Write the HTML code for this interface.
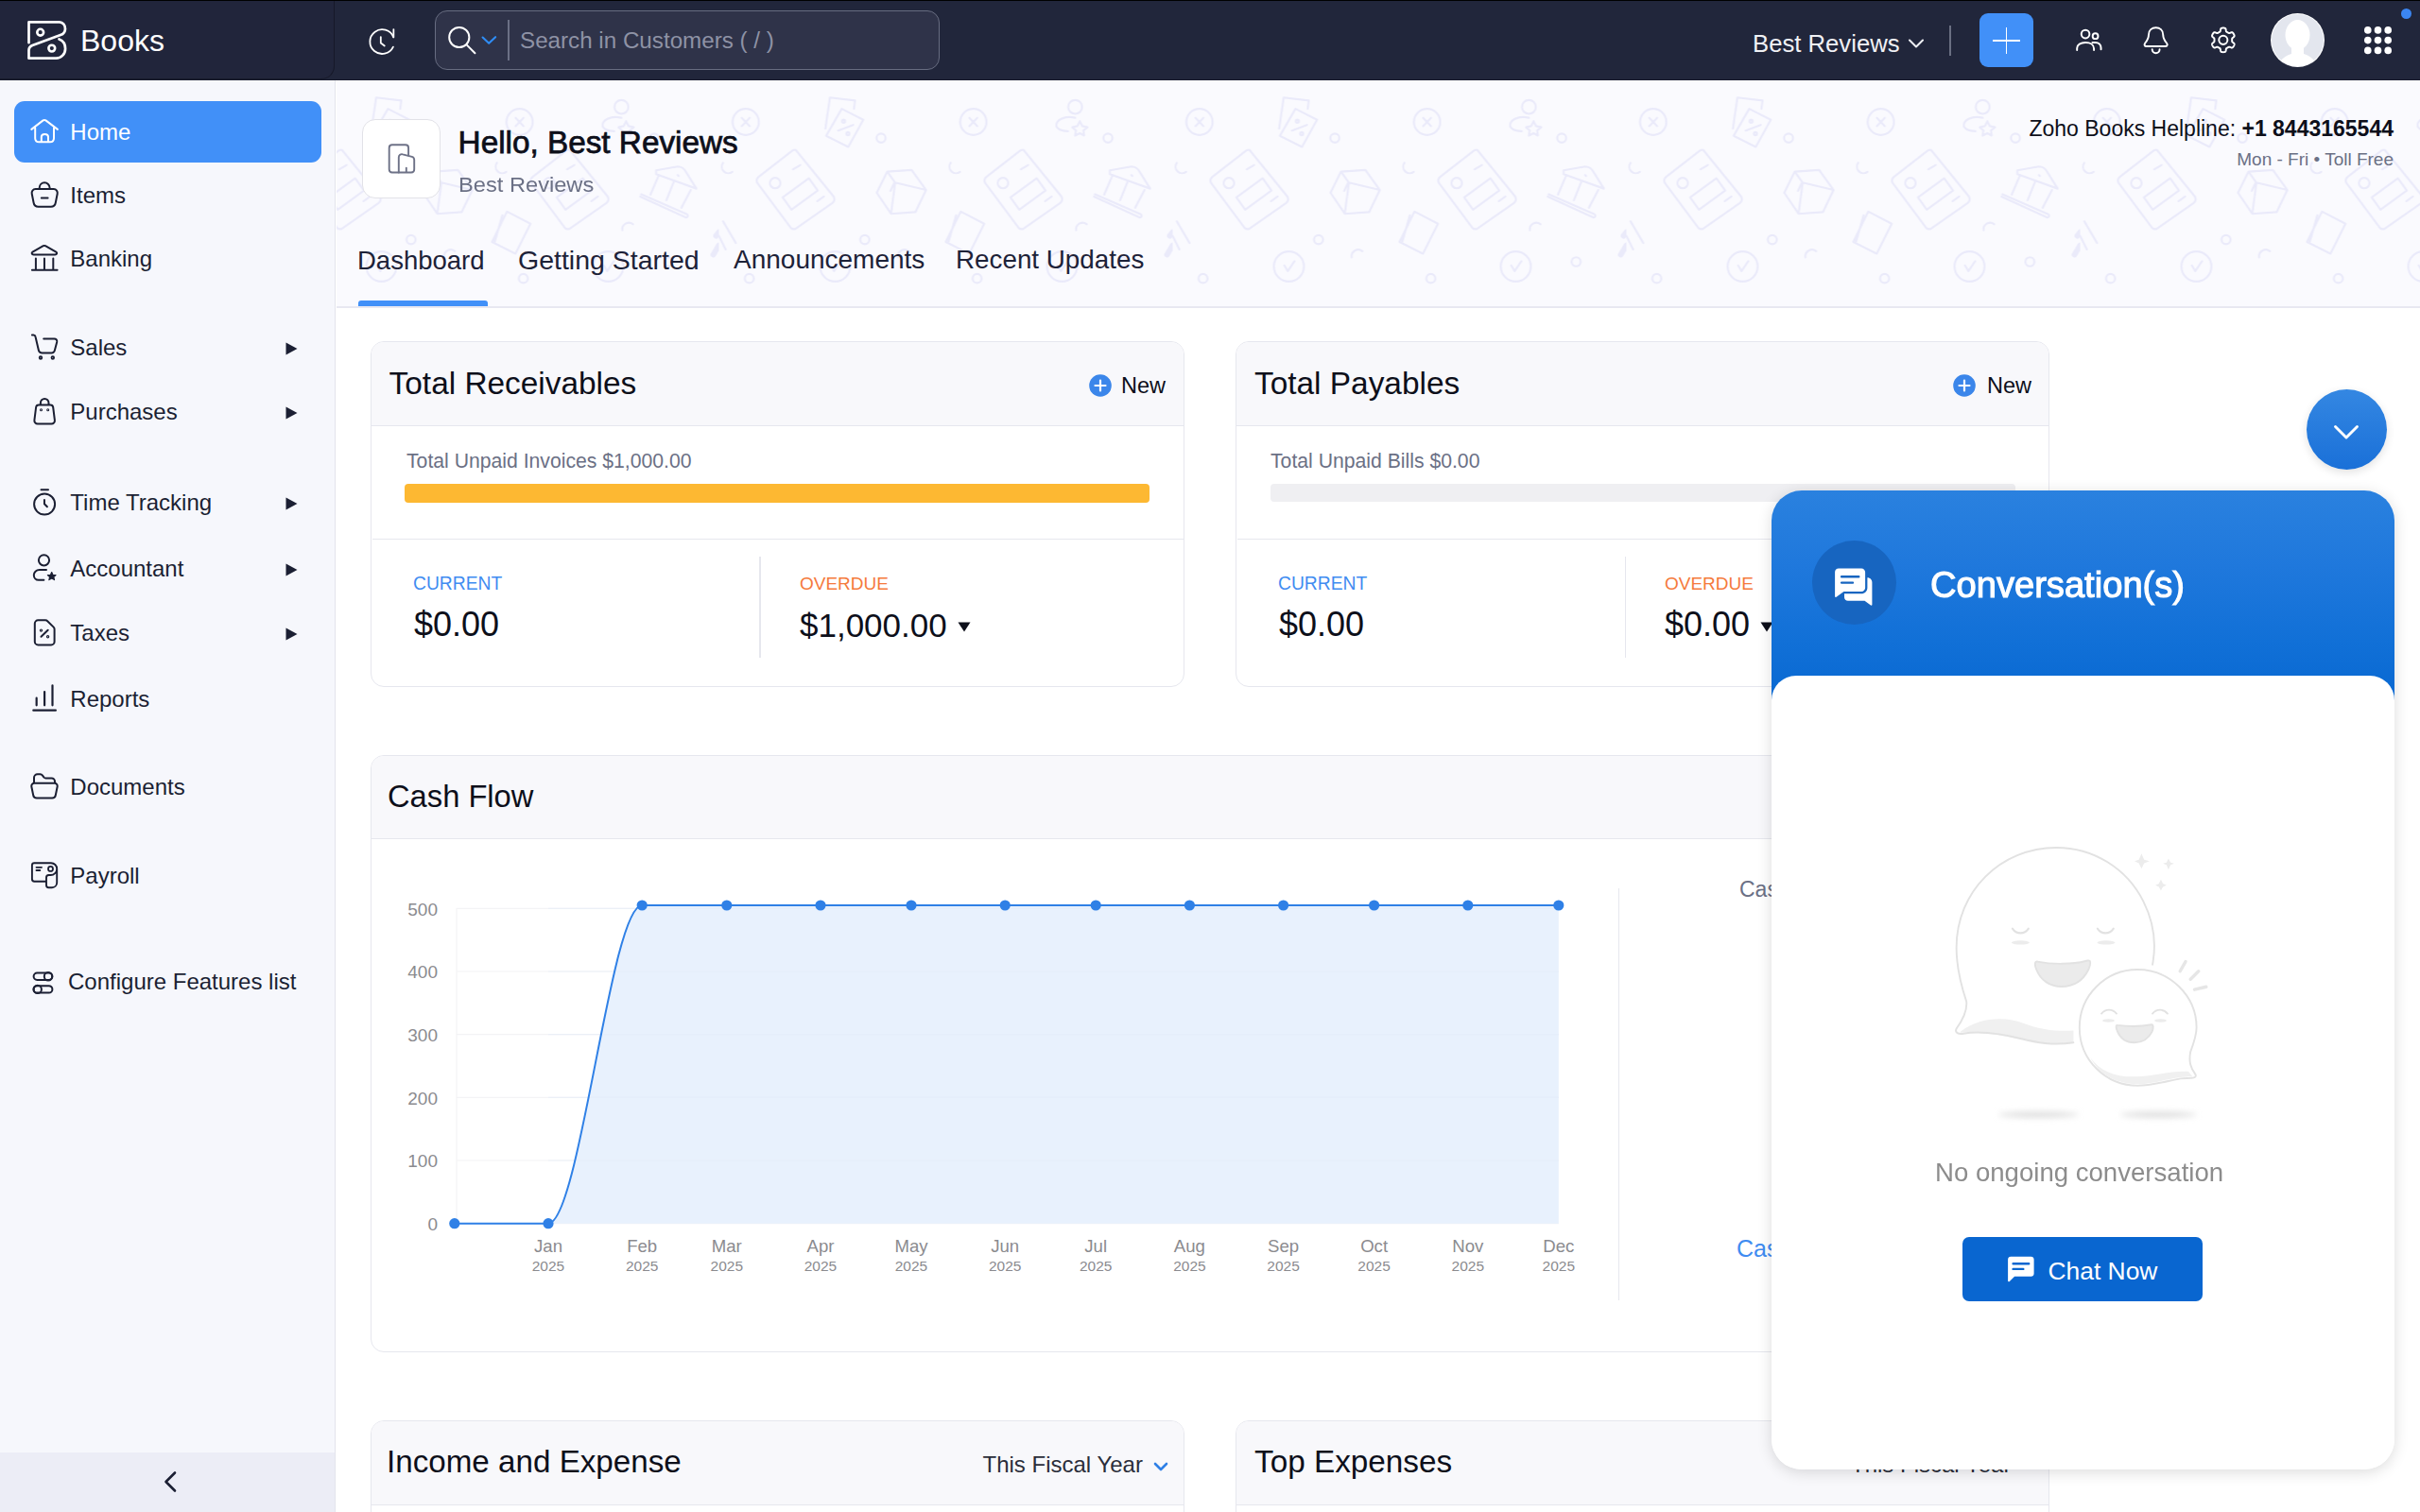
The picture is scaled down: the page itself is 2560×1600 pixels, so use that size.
<!DOCTYPE html>
<html><head><meta charset="utf-8"><title>Zoho Books</title>
<style>
html,body{margin:0;padding:0;width:2560px;height:1600px;overflow:hidden;background:#fff;}
body{position:relative;font-family:"Liberation Sans", sans-serif;}
.t{position:absolute;white-space:nowrap;line-height:1;font-family:"Liberation Sans", sans-serif;}
svg{overflow:visible;}
</style></head><body>
<div style="position:absolute;left:0px;top:0px;width:2560px;height:85px;background:#21263b;"></div>
<div style="position:absolute;left:0px;top:0px;width:2560px;height:1.2px;background:#000;"></div>
<div style="position:absolute;left:0px;top:84px;width:2560px;height:1px;background:#181b2c;"></div>
<div style="position:absolute;left:-2px;top:1px;width:356px;height:83px;box-sizing:border-box;background:#21253b;border-right:1.2px solid #161929;border-bottom:1.2px solid #191c2c;border-bottom-right-radius:14px;"></div>
<svg style="position:absolute;left:24px;top:16px;" width="52" height="52" viewBox="0 0 52 52" fill="none"><path d="M6.5 29.2 V7.4 H38.9 C42.3 7.4 45 10.6 45 14.4 C45 17.5 43 20 40 21.1 L10.3 32 C8 32.9 6.5 34.6 6.5 37 V45.7 H35.4 C40.8 45.7 45.1 41 45.1 35.4 C45.1 30.8 42.4 26.9 38.5 25.4" stroke="#fff" stroke-width="2.7" stroke-linecap="round" stroke-linejoin="round"/><circle cx="18.7" cy="18.2" r="3.4" stroke="#fff" stroke-width="2.6"/><circle cx="30.8" cy="35.1" r="3.4" stroke="#fff" stroke-width="2.6"/></svg>
<div class="t" style="left:85px;top:26.91px;font-size:32px;color:#ffffff;font-weight:400;">Books</div>
<svg style="position:absolute;left:380px;top:20px;" width="160" height="48" viewBox="0 0 2420 726" fill="none"><path d="M548 292 A195 195 0 1 0 543 448" stroke="#fff" stroke-width="27" stroke-linecap="round"/><path d="M550 168 V292" stroke="#fff" stroke-width="27" stroke-linecap="round"/><path d="M345 288 V385 L405 432" stroke="#fff" stroke-width="27" stroke-linecap="round" stroke-linejoin="round"/></svg>
<div style="position:absolute;left:460px;top:11px;width:534px;height:63px;box-sizing:border-box;border:1.5px solid #686d81;border-radius:13px;background:#2f3349;"></div>
<svg style="position:absolute;left:380px;top:20px;" width="160" height="48" viewBox="0 0 2420 726" fill="none"><circle cx="1600" cy="295" r="160" stroke="#fff" stroke-width="30"/><path d="M1722 418 L1852 548" stroke="#fff" stroke-width="30" stroke-linecap="round"/><path d="M1975 295 L2075 390 L2180 290" stroke="#2f8df5" stroke-width="32" stroke-linecap="round" stroke-linejoin="round"/></svg>
<div style="position:absolute;left:537px;top:21px;width:1.6px;height:43px;background:#6b7085;"></div>
<div class="t" style="left:550px;top:31.11px;font-size:24.2px;color:#8e92a5;font-weight:400;">Search in Customers ( / )</div>
<div class="t" style="left:1854px;top:33.54px;font-size:25.7px;color:#f0f1f5;font-weight:400;">Best Reviews</div>
<svg style="position:absolute;left:2018px;top:40px;" width="18" height="12" viewBox="0 0 18 12" fill="none"><path d="M2 2.5 L9 9.5 L16 2.5" stroke="#eef0f5" stroke-width="2" stroke-linecap="round" stroke-linejoin="round"/></svg>
<div style="position:absolute;left:2062px;top:27px;width:2px;height:32px;background:#6a6f82;"></div>
<div style="position:absolute;left:2094px;top:14px;width:57px;height:57px;background:#4190f8;border-radius:9px;"></div>
<div style="position:absolute;left:2108px;top:41.7px;width:29px;height:1.9px;background:#fff;"></div>
<div style="position:absolute;left:2121.6px;top:29px;width:1.9px;height:28px;background:#fff;"></div>
<svg style="position:absolute;left:2185px;top:20px;" width="190" height="46" viewBox="0 0 2420 586" fill="none"><g stroke="#fff" stroke-width="25" stroke-linecap="round" stroke-linejoin="round"><circle cx="268" cy="205" r="55"/><circle cx="402" cy="232" r="37"/><path d="M155 420 V395 C155 350 205 318 268 318 C335 318 383 350 383 400 V420"/><path d="M362 318 H400 C445 318 478 348 478 392 V410"/><path d="M1090 370 H1350 C1372 370 1378 345 1362 325 C1322 275 1315 250 1315 215 C1315 150 1270 118 1218 118 C1165 118 1120 150 1120 215 C1120 250 1113 275 1073 325 C1058 345 1064 370 1090 370 Z"/><path d="M1168 412 A50 50 0 0 0 1268 412"/><path d="M2244.0 285.0 L2244.0 288.1 L2243.9 291.2 L2243.8 294.4 L2243.8 297.5 L2243.9 300.7 L2244.5 303.9 L2245.8 307.4 L2248.8 311.3 L2254.0 316.0 L2261.2 321.5 L2268.2 327.4 L2272.8 333.0 L2275.0 338.1 L2275.4 342.7 L2274.7 347.0 L2273.5 351.1 L2271.9 355.1 L2270.2 359.0 L2268.2 362.8 L2266.2 366.5 L2264.0 370.2 L2261.6 373.7 L2259.2 377.2 L2256.5 380.5 L2253.6 383.6 L2250.2 386.4 L2246.0 388.3 L2240.5 389.0 L2233.3 387.8 L2224.7 384.7 L2216.3 381.3 L2209.7 379.0 L2204.8 378.4 L2201.1 379.0 L2198.0 380.2 L2195.2 381.7 L2192.5 383.2 L2189.9 384.9 L2187.2 386.5 L2184.5 388.1 L2181.8 389.6 L2179.1 391.1 L2176.3 392.6 L2173.6 394.1 L2170.9 395.8 L2168.3 397.9 L2166.0 400.8 L2164.1 405.3 L2162.7 412.2 L2161.5 421.2 L2159.9 430.2 L2157.3 437.1 L2154.0 441.5 L2150.2 444.1 L2146.1 445.6 L2142.0 446.6 L2137.8 447.3 L2133.5 447.7 L2129.3 447.9 L2125.0 448.0 L2120.7 447.9 L2116.5 447.7 L2112.2 447.3 L2108.0 446.6 L2103.9 445.6 L2099.8 444.1 L2096.0 441.5 L2092.7 437.1 L2090.1 430.2 L2088.5 421.2 L2087.3 412.2 L2085.9 405.3 L2084.0 400.8 L2081.7 397.9 L2079.1 395.8 L2076.4 394.1 L2073.7 392.6 L2070.9 391.1 L2068.2 389.6 L2065.5 388.1 L2062.8 386.5 L2060.1 384.9 L2057.5 383.2 L2054.8 381.7 L2052.0 380.2 L2048.9 379.0 L2045.2 378.4 L2040.3 379.0 L2033.7 381.3 L2025.3 384.7 L2016.7 387.8 L2009.5 389.0 L2004.0 388.3 L1999.8 386.4 L1996.4 383.6 L1993.5 380.5 L1990.8 377.2 L1988.4 373.7 L1986.0 370.2 L1983.8 366.5 L1981.8 362.8 L1979.8 359.0 L1978.1 355.1 L1976.5 351.1 L1975.3 347.0 L1974.6 342.7 L1975.0 338.1 L1977.2 333.0 L1981.8 327.4 L1988.8 321.5 L1996.0 316.0 L2001.2 311.3 L2004.2 307.4 L2005.5 303.9 L2006.1 300.7 L2006.2 297.5 L2006.2 294.4 L2006.1 291.2 L2006.0 288.1 L2006.0 285.0 L2006.0 281.9 L2006.1 278.8 L2006.2 275.6 L2006.2 272.5 L2006.1 269.3 L2005.5 266.1 L2004.2 262.6 L2001.2 258.7 L1996.0 254.0 L1988.8 248.5 L1981.8 242.6 L1977.2 237.0 L1975.0 231.9 L1974.6 227.3 L1975.3 223.0 L1976.5 218.9 L1978.1 214.9 L1979.8 211.0 L1981.8 207.2 L1983.8 203.5 L1986.0 199.8 L1988.4 196.3 L1990.8 192.8 L1993.5 189.5 L1996.4 186.4 L1999.8 183.6 L2004.0 181.7 L2009.5 181.0 L2016.7 182.2 L2025.3 185.3 L2033.7 188.7 L2040.3 191.0 L2045.2 191.6 L2048.9 191.0 L2052.0 189.8 L2054.8 188.3 L2057.5 186.8 L2060.1 185.1 L2062.8 183.5 L2065.5 181.9 L2068.2 180.4 L2070.9 178.9 L2073.7 177.4 L2076.4 175.9 L2079.1 174.2 L2081.7 172.1 L2084.0 169.2 L2085.9 164.7 L2087.3 157.8 L2088.5 148.8 L2090.1 139.8 L2092.7 132.9 L2096.0 128.5 L2099.8 125.9 L2103.9 124.4 L2108.0 123.4 L2112.2 122.7 L2116.5 122.3 L2120.7 122.1 L2125.0 122.0 L2129.3 122.1 L2133.5 122.3 L2137.8 122.7 L2142.0 123.4 L2146.1 124.4 L2150.2 125.9 L2154.0 128.5 L2157.3 132.9 L2159.9 139.8 L2161.5 148.8 L2162.7 157.8 L2164.1 164.7 L2166.0 169.2 L2168.3 172.1 L2170.9 174.2 L2173.6 175.9 L2176.3 177.4 L2179.1 178.9 L2181.8 180.4 L2184.5 181.9 L2187.2 183.5 L2189.9 185.1 L2192.5 186.8 L2195.2 188.3 L2198.0 189.8 L2201.1 191.0 L2204.8 191.6 L2209.7 191.0 L2216.3 188.7 L2224.7 185.3 L2233.3 182.2 L2240.5 181.0 L2246.0 181.7 L2250.2 183.6 L2253.6 186.4 L2256.5 189.5 L2259.2 192.8 L2261.6 196.3 L2264.0 199.8 L2266.2 203.5 L2268.2 207.2 L2270.2 211.0 L2271.9 214.9 L2273.5 218.9 L2274.7 223.0 L2275.4 227.3 L2275.0 231.9 L2272.8 237.0 L2268.2 242.6 L2261.2 248.5 L2254.0 254.0 L2248.8 258.7 L2245.8 262.6 L2244.5 266.1 L2243.9 269.3 L2243.8 272.5 L2243.8 275.6 L2243.9 278.8 L2244.0 281.9 Z"/><circle cx="2125" cy="285" r="58"/></g></svg>
<svg style="position:absolute;left:2400px;top:12px;" width="61" height="61" viewBox="0 0 61 61" fill="none"><defs><clipPath id="av"><circle cx="30.5" cy="30.5" r="27.5"/></clipPath></defs><circle cx="30.5" cy="30.5" r="28.5" fill="#fff"/><g clip-path="url(#av)"><rect width="61" height="61" fill="#e3e6ee"/><ellipse cx="30.5" cy="25" rx="13" ry="16" fill="#fff"/><path d="M10 62 C10 52 17 47 24 45 L24 38 H37 V45 C44 47 51 52 51 62 Z" fill="#fff"/></g></svg>
<svg style="position:absolute;left:2500px;top:27px;" width="32" height="32" viewBox="0 0 32 32" fill="none"><circle cx="4.8" cy="4.9" r="3.8" fill="#fff"/><circle cx="4.8" cy="15.6" r="3.8" fill="#fff"/><circle cx="4.8" cy="26.4" r="3.8" fill="#fff"/><circle cx="15.5" cy="4.9" r="3.8" fill="#fff"/><circle cx="15.5" cy="15.6" r="3.8" fill="#fff"/><circle cx="15.5" cy="26.4" r="3.8" fill="#fff"/><circle cx="26.2" cy="4.9" r="3.8" fill="#fff"/><circle cx="26.2" cy="15.6" r="3.8" fill="#fff"/><circle cx="26.2" cy="26.4" r="3.8" fill="#fff"/></svg>
<div style="position:absolute;left:2539.8px;top:8.5px;width:11.6px;height:11.6px;background:#3b86f2;border-radius:50%;"></div>
<div style="position:absolute;left:0px;top:85px;width:354px;height:1515px;background:#f6f7fc;"></div>
<div style="position:absolute;left:354px;top:85px;width:1.2px;height:1515px;background:#e3e4ec;"></div>
<div style="position:absolute;left:15px;top:107px;width:325px;height:65px;background:#4190f8;border-radius:11px;"></div>
<svg style="position:absolute;left:26px;top:118px;" width="44" height="44" viewBox="0 0 44 44" fill="none"><g stroke="#fff" stroke-width="2" stroke-linecap="round" stroke-linejoin="round"><path d="M7.3 18.9 L19.6 9.4 Q21 8.4 22.4 9.4 L34.9 18.9 M11.2 17.5 V28.2 Q11.2 32.3 15.3 32.3 H27 Q31 32.3 31 28.2 V17.5 M17.8 32 V26.8 Q17.8 23.9 21.4 23.9 Q25 23.9 25 26.8 V32"/></g></svg>
<svg style="position:absolute;left:26px;top:185px;" width="44" height="44" viewBox="0 0 44 44" fill="none"><g stroke="#1b1f33" stroke-width="2" stroke-linecap="round" stroke-linejoin="round"><path d="M12.2 15.1 H30.8 C33.5 15.1 35.2 17.3 34.7 20 L32.8 29.5 C32.4 32 30.3 33.8 27.8 33.8 H14.6 C12.1 33.8 10 32 9.6 29.5 L7.7 20 C7.2 17.3 8.9 15.1 11.6 15.1 Z M15.7 14.6 V13.8 C15.7 10.8 18 8.3 21.1 8.3 C24.2 8.3 26.6 10.8 26.6 13.8 V14.6 M17.8 24.5 H24.6"/></g></svg>
<svg style="position:absolute;left:26px;top:252px;" width="44" height="44" viewBox="0 0 44 44" fill="none"><g stroke="#1b1f33" stroke-width="2" stroke-linecap="round" stroke-linejoin="round"><path d="M9.6 17.4 H32.2 C34.2 17.4 34.8 15.6 33.3 14.7 L22 8.2 C21.3 7.8 20.5 7.8 19.8 8.2 L8.5 14.7 C7 15.6 7.6 17.4 9.6 17.4 Z M11.9 21.5 V33.5 M20.95 21.5 V33.5 M30.3 21.5 V33.5 M7.9 33.8 H34.6"/></g></svg>
<svg style="position:absolute;left:26px;top:345px;" width="44" height="44" viewBox="0 0 44 44" fill="none"><g stroke="#1b1f33" stroke-width="2" stroke-linecap="round" stroke-linejoin="round"><path d="M7.9 9.6 H9.4 C10.4 9.6 11.3 10.3 11.5 11.3 L14.9 25.7 C15.3 27.3 16.8 28.4 18.5 28.4 H28.7 C30.2 28.4 31.4 27.4 31.8 26 L34.2 16.9 C34.6 15.1 33.3 13.4 31.5 13.4 H20.2"/><circle cx="17" cy="33.5" r="0.9" stroke-width="2.6"/><circle cx="29.8" cy="33.5" r="0.9" stroke-width="2.6"/></g></svg>
<svg style="position:absolute;left:26px;top:413px;" width="44" height="44" viewBox="0 0 44 44" fill="none"><g stroke="#1b1f33" stroke-width="2" stroke-linecap="round" stroke-linejoin="round"><path d="M15 15.4 H27.3 C28.8 15.4 30 16.5 30.2 18 L31.9 31.6 C32.2 33.7 30.6 35.5 28.5 35.5 H13.8 C11.7 35.5 10.1 33.7 10.4 31.6 L12.1 18 C12.3 16.5 13.5 15.4 15 15.4 Z M16.9 15 V13.5 C16.9 11 18.8 9 21.2 9 C23.6 9 25.5 11 25.5 13.5 V15"/><circle cx="17.5" cy="20.7" r="0.5" stroke-width="2"/><circle cx="24.7" cy="20.7" r="0.5" stroke-width="2"/></g></svg>
<svg style="position:absolute;left:26px;top:508px;" width="44" height="44" viewBox="0 0 44 44" fill="none"><g stroke="#1b1f33" stroke-width="2" stroke-linecap="round" stroke-linejoin="round"><circle cx="21.1" cy="25.6" r="11"/><path d="M17.5 10.3 H25 M20.95 20.9 V25.3 L23.9 28.3"/></g></svg>
<svg style="position:absolute;left:26px;top:578px;" width="44" height="44" viewBox="0 0 44 44" fill="none"><g stroke="#1b1f33" stroke-width="2" stroke-linecap="round" stroke-linejoin="round"><circle cx="20.5" cy="14.85" r="5.6"/><path d="M23 25 H15.8 C12.3 25 9.8 27.6 9.8 30.5 C9.8 33.4 12 35.8 14.8 35.8 H20.4"/><path d="M28.7 27.6 L30 30.4 L33 30.6 L30.8 32.6 L31.5 35.6 L28.7 34 L25.9 35.6 L26.6 32.6 L24.4 30.6 L27.4 30.4 Z" fill="#1b1f33" stroke-width="1.2"/></g></svg>
<svg style="position:absolute;left:26px;top:647px;" width="44" height="44" viewBox="0 0 44 44" fill="none"><g stroke="#1b1f33" stroke-width="2" stroke-linecap="round" stroke-linejoin="round"><path d="M14.3 9.3 H22 C22.8 9.3 23.6 9.6 24.2 10.2 L30.7 16.6 C31.3 17.2 31.6 18 31.6 18.8 V31.9 C31.6 33.8 30.1 35.4 28.1 35.4 H14.3 C12.4 35.4 10.8 33.8 10.8 31.9 V12.8 C10.8 10.9 12.4 9.3 14.3 9.3 Z M17.5 26.8 L24.7 19.8"/><circle cx="17.5" cy="20.1" r="0.6" stroke-width="2.2"/><circle cx="24.6" cy="26.8" r="0.6" stroke-width="2.2"/></g></svg>
<svg style="position:absolute;left:26px;top:716px;" width="44" height="44" viewBox="0 0 44 44" fill="none"><g stroke="#1b1f33" stroke-width="2.2" stroke-linecap="round" stroke-linejoin="round"><path d="M12.66 22.7 V30.3 M21.1 16 V30.3 M29.5 9.3 V30.3 M9.3 35.65 H32.9"/></g></svg>
<svg style="position:absolute;left:26px;top:809px;" width="44" height="44" viewBox="0 0 44 44" fill="none"><g stroke="#1b1f33" stroke-width="2" stroke-linecap="round" stroke-linejoin="round"><path d="M10 19.2 V14 C10 12 11.6 10.3 13.7 10.3 H16.5 C17.5 10.3 18.4 10.8 19 11.6 L20.5 13.6 C21 14.1 21.6 14.4 22.3 14.4 H28.6 C30.5 14.4 32 15.9 32 17.8 V19.2 M10.8 19.8 H31.7 C33.6 19.8 35 21.5 34.7 23.3 L32.8 32.5 C32.5 34.2 31 35.5 29.2 35.5 H12.8 C11 35.5 9.5 34.2 9.2 32.5 L7.3 23.3 C7 21.5 8.4 19.8 10.3 19.8 Z"/></g></svg>
<svg style="position:absolute;left:26px;top:903px;" width="44" height="44" viewBox="0 0 44 44" fill="none"><g stroke="#1b1f33" stroke-width="1.9" stroke-linecap="round" stroke-linejoin="round"><path d="M23 29.7 H10.3 C9 29.7 7.9 28.6 7.9 27.3 V12.6 C7.9 11.3 9 10.2 10.3 10.2 H28 C31.4 10.2 34.2 13 34.2 16.4 V31 C34.2 33.9 31.9 36.2 29 36.2 H25.4 C24.1 36.2 23 35.1 23 33.8 V25.6 C23 24.2 24.1 23 25.5 23 H27.6 C31.2 23 34.2 20 34.2 16.4"/><path d="M12.5 14.85 H18 M12.5 18.05 H16.3"/><circle cx="27.5" cy="16.45" r="2.5" stroke-width="1.8"/></g></svg>
<svg style="position:absolute;left:26px;top:1015px;" width="44" height="44" viewBox="0 0 44 44" fill="none"><g stroke="#1b1f33" stroke-width="2" stroke-linecap="round" stroke-linejoin="round"><rect x="9.6" y="14.6" width="19.8" height="7.4" rx="3.7"/><circle cx="25" cy="18.3" r="4.2"/><rect x="9.6" y="28.2" width="19.8" height="7.4" rx="3.7"/><circle cx="13.7" cy="31.9" r="4.2"/></g></svg>
<div class="t" style="left:74.3px;top:127.68px;font-size:24px;color:#ffffff;font-weight:400;">Home</div>
<div class="t" style="left:74.3px;top:194.68px;font-size:24px;color:#1b1f33;font-weight:400;">Items</div>
<div class="t" style="left:74.3px;top:261.68px;font-size:24px;color:#1b1f33;font-weight:400;">Banking</div>
<div class="t" style="left:74.3px;top:355.68px;font-size:24px;color:#1b1f33;font-weight:400;">Sales</div>
<div class="t" style="left:74.3px;top:423.68px;font-size:24px;color:#1b1f33;font-weight:400;">Purchases</div>
<div class="t" style="left:74.3px;top:519.68px;font-size:24px;color:#1b1f33;font-weight:400;">Time Tracking</div>
<div class="t" style="left:74.3px;top:589.68px;font-size:24px;color:#1b1f33;font-weight:400;">Accountant</div>
<div class="t" style="left:74.3px;top:657.68px;font-size:24px;color:#1b1f33;font-weight:400;">Taxes</div>
<div class="t" style="left:74.3px;top:727.68px;font-size:24px;color:#1b1f33;font-weight:400;">Reports</div>
<div class="t" style="left:74.3px;top:820.68px;font-size:24px;color:#1b1f33;font-weight:400;">Documents</div>
<div class="t" style="left:74.3px;top:914.68px;font-size:24px;color:#1b1f33;font-weight:400;">Payroll</div>
<div class="t" style="left:72px;top:1026.68px;font-size:24px;color:#1b1f33;font-weight:400;">Configure Features list</div>
<svg style="position:absolute;left:302px;top:362px;" width="13" height="14" viewBox="0 0 13 14" fill="none"><path d="M0.5 0.5 L12.5 7 L0.5 13.5 Z" fill="#1b1f33"/></svg>
<svg style="position:absolute;left:302px;top:430px;" width="13" height="14" viewBox="0 0 13 14" fill="none"><path d="M0.5 0.5 L12.5 7 L0.5 13.5 Z" fill="#1b1f33"/></svg>
<svg style="position:absolute;left:302px;top:526px;" width="13" height="14" viewBox="0 0 13 14" fill="none"><path d="M0.5 0.5 L12.5 7 L0.5 13.5 Z" fill="#1b1f33"/></svg>
<svg style="position:absolute;left:302px;top:596px;" width="13" height="14" viewBox="0 0 13 14" fill="none"><path d="M0.5 0.5 L12.5 7 L0.5 13.5 Z" fill="#1b1f33"/></svg>
<svg style="position:absolute;left:302px;top:664px;" width="13" height="14" viewBox="0 0 13 14" fill="none"><path d="M0.5 0.5 L12.5 7 L0.5 13.5 Z" fill="#1b1f33"/></svg>
<div style="position:absolute;left:0px;top:1537px;width:354px;height:63px;background:#ecedf6;"></div>
<svg style="position:absolute;left:170px;top:1556px;" width="20" height="24" viewBox="0 0 20 24" fill="none"><path d="M15 2.5 L5.5 12 L15 21.5" stroke="#1b1f33" stroke-width="2.6" stroke-linecap="round" stroke-linejoin="round"/></svg>
<div style="position:absolute;left:355.5px;top:85px;width:2204.5px;height:240px;background:#fafafe;"></div>
<svg style="position:absolute;left:355.5px;top:85px;opacity:1;" width="2204.5" height="240" viewBox="0 0 2204.5 240" fill="none"><defs><pattern id="bp" x="404.5" y="0" width="480" height="240" patternUnits="userSpaceOnUse" viewBox="0 0 2420 1210">
<g stroke="#eaeafa" stroke-width="11" fill="none" stroke-linecap="round" stroke-linejoin="round">
<circle cx="143" cy="222" r="70"/><path d="M122 200 L164 244 M164 200 L122 244"/>
<path d="M568 258 L592 92 L726 108 L720 152"/><path d="M655 152 L770 210 L690 355 L572 296 Z"/><circle cx="665" cy="218" r="8"/><circle cx="688" cy="285" r="8"/><path d="M636 268 L716 238"/>
<circle cx="865" cy="308" r="24"/>
<path d="M22 440 A35 35 0 0 0 72 488"/>
<path d="M410 372 L612 620 Q622 640 605 655 L412 790 Q395 800 382 785 L205 548 Q195 530 212 515 L392 375 Q402 368 410 372 Z"/><path d="M340 625 L480 522 L527 588 L387 690 Z"/><circle cx="300" cy="548" r="28"/><path d="M395 475 L435 452 M525 645 L560 620"/>
<path d="M842 600 L898 487 L1028 478 L1105 585 L1048 703 L918 712 Z M898 487 L940 546 L1105 585 M940 546 L918 712 M915 590 L935 548"/>
<path d="M22 752 L90 868 M0 830 L36 902"/>
<path d="M2390 930 L2420 880" stroke-width="30"/><path d="M2405 830 L2420 810" stroke-width="30"/>
<circle cx="778" cy="850" r="24"/>
<path d="M955 945 A35 35 0 0 1 1012 912"/>
<circle cx="620" cy="993" r="80"/><path d="M596 988 L614 1018 L650 965"/>
<circle cx="162" cy="1057" r="24"/>
<circle cx="1357" cy="222" r="70"/><path d="M1336 200 L1378 244 M1378 200 L1336 244"/>
<circle cx="1900" cy="142" r="37"/><path d="M1900 200 C1840 185 1795 215 1800 245 C1805 262 1830 270 1862 272"/><path d="M1925 218 L1938 244 L1966 250 L1944 268 L1948 295 L1925 282 L1900 295 L1904 268 L1885 250 L1912 244 Z"/>
<circle cx="2075" cy="308" r="24"/>
<path d="M1236 440 A35 35 0 0 0 1286 488"/>
<path d="M1625 372 L1827 620 Q1837 640 1820 655 L1627 790 Q1610 800 1597 785 L1420 548 Q1410 530 1427 515 L1607 375 Q1617 368 1625 372 Z"/><path d="M1555 625 L1695 522 L1742 588 L1602 690 Z"/><circle cx="1515" cy="548" r="28"/><path d="M1610 475 L1650 452 M1740 645 L1775 620"/>
<path d="M2085 480 L2200 460 Q2230 460 2245 490 L2300 578 L2085 500 Z M2200 505 L2205 510 M2100 505 L2055 610 M2270 585 L2220 680 M2180 540 L2140 640 M2005 608 L2250 715 Q2262 725 2245 732 L2000 620"/>
<path d="M1290 700 L1415 765 L1335 925 L1210 862 Z M1265 720 L1225 860"/>
<path d="M1905 800 A35 35 0 0 1 1962 768"/>
<circle cx="2152" cy="968" r="24"/>
<circle cx="1830" cy="993" r="80"/><path d="M1806 988 L1824 1018 L1860 965"/>
<circle cx="1377" cy="1057" r="24"/>
</g></pattern></defs><rect width="2204.5" height="240" fill="url(#bp)"/></svg>
<div style="position:absolute;left:355.5px;top:323.5px;width:2204.5px;height:2px;background:#e8e8f1;"></div>
<div style="position:absolute;left:383px;top:126px;width:83px;height:84px;box-sizing:border-box;background:#fff;border:1.5px solid #e2e2e8;border-radius:14px;"></div>
<svg style="position:absolute;left:400px;top:143px;" width="50" height="50" viewBox="0 0 50 50" fill="none"><g stroke="#6e7287" stroke-width="1.9" stroke-linecap="round" stroke-linejoin="round"><path d="M21.8 39.5 H14.9 C13.1 39.5 11.7 38.1 11.7 36.3 V13.5 C11.7 11.7 13.1 10.25 14.9 10.25 H28.9 C30.7 10.25 32.1 11.7 32.1 13.5 V21.5"/><path d="M21.8 39.5 V23.5 C21.8 21.3 23.9 19.7 26 20.3 L35.8 22.8 C37.2 23.2 38.2 24.5 38.2 26 V36.3 C38.2 38.1 36.8 39.5 35 39.5 H21.8 M29.8 39.5 V34.6"/></g></svg>
<div class="t" style="left:484.6px;top:133.81px;font-size:33.3px;color:#0d0f1a;font-weight:400;-webkit-text-stroke:0.75px #0d0f1a;">Hello, Best Reviews</div>
<div class="t" style="left:485px;top:184.88px;font-size:22px;color:#6b7085;font-weight:400;transform:scaleX(1.075);transform-origin:left top;">Best Reviews</div>
<div class="t" style="left:378px;top:261.72px;font-size:27.5px;color:#1d2238;font-weight:400;">Dashboard</div>
<div class="t" style="left:548px;top:260.87px;font-size:28.5px;color:#1d2238;font-weight:400;">Getting Started</div>
<div class="t" style="left:776px;top:261.30px;font-size:28px;color:#1d2238;font-weight:400;">Announcements</div>
<div class="t" style="left:1011px;top:261.47px;font-size:27.8px;color:#1d2238;font-weight:400;">Recent Updates</div>
<div style="position:absolute;left:379px;top:318px;width:137px;height:6px;background:#4190f8;border-radius:3px 3px 0 0;"></div>
<div class="t" style="right:28px;top:125.13px;font-size:23px;color:#0d0f1a;">Zoho Books Helpline: <b>+1 8443165544</b></div>
<div class="t" style="right:28px;top:158.92px;font-size:19px;color:#6b7085;font-weight:400;">Mon - Fri &bull; Toll Free</div>
<div style="position:absolute;left:392px;top:361px;width:861px;height:366px;box-sizing:border-box;border:1.5px solid #e6e7ee;border-radius:14px;background:#fff;overflow:hidden;"><div style="height:88px;background:#f8f8fb;border-bottom:1.5px solid #e6e7ee;"></div></div>
<div class="t" style="left:411.6px;top:388.73px;font-size:33.4px;color:#0d0f1a;font-weight:400;">Total Receivables</div>
<svg style="position:absolute;left:1151.7px;top:396px;" width="24" height="24" viewBox="0 0 24 24" fill="none"><circle cx="12" cy="12" r="11.8" fill="#3b86ea"/><path d="M12 6.5 V17.5 M6.5 12 H17.5" stroke="#fff" stroke-width="2.2" stroke-linecap="round"/></svg>
<div class="t" style="left:1186px;top:396.81px;font-size:23.5px;color:#0d0f1a;font-weight:400;">New</div>
<div class="t" style="left:430px;top:476.75px;font-size:21.2px;color:#6b7085;font-weight:400;">Total Unpaid Invoices $1,000.00</div>
<div style="position:absolute;left:428px;top:512px;width:788px;height:20px;background:#fdb832;border-radius:4px;"></div>
<div style="position:absolute;left:393.5px;top:569.5px;width:858px;height:1.5px;background:#e6e7ee;"></div>
<div style="position:absolute;left:803px;top:589px;width:1.5px;height:107px;background:#e6e7ee;"></div>
<div class="t" style="left:437px;top:607.66px;font-size:19.3px;color:#3f8cf1;font-weight:400;">CURRENT</div>
<div class="t" style="left:438px;top:642.73px;font-size:36px;color:#0d0f1a;font-weight:400;">$0.00</div>
<div class="t" style="left:846px;top:607.92px;font-size:19px;color:#f57a3c;font-weight:400;">OVERDUE</div>
<div class="t" style="left:846px;top:643.57px;font-size:35px;color:#0d0f1a;font-weight:400;">$1,000.00</div>
<svg style="position:absolute;left:1013px;top:658px;" width="14" height="11" viewBox="0 0 14 11" fill="none"><path d="M0.5 0.5 H13.5 L7 10.5 Z" fill="#0d0f1a"/></svg>
<div style="position:absolute;left:1307px;top:361px;width:861px;height:366px;box-sizing:border-box;border:1.5px solid #e6e7ee;border-radius:14px;background:#fff;overflow:hidden;"><div style="height:88px;background:#f8f8fb;border-bottom:1.5px solid #e6e7ee;"></div></div>
<div class="t" style="left:1327px;top:388.73px;font-size:33.4px;color:#0d0f1a;font-weight:400;">Total Payables</div>
<svg style="position:absolute;left:2066.4px;top:396px;" width="24" height="24" viewBox="0 0 24 24" fill="none"><circle cx="12" cy="12" r="11.8" fill="#3b86ea"/><path d="M12 6.5 V17.5 M6.5 12 H17.5" stroke="#fff" stroke-width="2.2" stroke-linecap="round"/></svg>
<div class="t" style="left:2102px;top:396.81px;font-size:23.5px;color:#0d0f1a;font-weight:400;">New</div>
<div class="t" style="left:1344px;top:476.75px;font-size:21.2px;color:#6b7085;font-weight:400;">Total Unpaid Bills $0.00</div>
<div style="position:absolute;left:1344px;top:512px;width:788px;height:19px;background:#efeff2;border-radius:4px;"></div>
<div style="position:absolute;left:1308.5px;top:569.5px;width:858px;height:1.5px;background:#e6e7ee;"></div>
<div style="position:absolute;left:1718.5px;top:589px;width:1.5px;height:107px;background:#e6e7ee;"></div>
<div class="t" style="left:1352px;top:607.66px;font-size:19.3px;color:#3f8cf1;font-weight:400;">CURRENT</div>
<div class="t" style="left:1353px;top:642.73px;font-size:36px;color:#0d0f1a;font-weight:400;">$0.00</div>
<div class="t" style="left:1761px;top:607.92px;font-size:19px;color:#f57a3c;font-weight:400;">OVERDUE</div>
<div class="t" style="left:1761px;top:642.73px;font-size:36px;color:#0d0f1a;font-weight:400;">$0.00</div>
<svg style="position:absolute;left:1862px;top:658px;" width="14" height="11" viewBox="0 0 14 11" fill="none"><path d="M0.5 0.5 H13.5 L7 10.5 Z" fill="#0d0f1a"/></svg>
<div style="position:absolute;left:392px;top:799px;width:1776px;height:632px;box-sizing:border-box;border:1.5px solid #e6e7ee;border-radius:14px;background:#fff;overflow:hidden;"><div style="height:87px;background:#f8f8fb;border-bottom:1.5px solid #e6e7ee;"></div></div>
<div class="t" style="left:410px;top:826.82px;font-size:32.7px;color:#0d0f1a;font-weight:400;">Cash Flow</div>
<svg style="position:absolute;left:0px;top:0px;pointer-events:none;" width="2560" height="1600" viewBox="0 0 2560 1600" fill="none"><path d="M483 1294.7 H1648.8" stroke="#f3f3f5" stroke-width="1.2"/><path d="M483 1228.0 H1648.8" stroke="#f3f3f5" stroke-width="1.2"/><path d="M483 1161.3 H1648.8" stroke="#f3f3f5" stroke-width="1.2"/><path d="M483 1094.7 H1648.8" stroke="#f3f3f5" stroke-width="1.2"/><path d="M483 1028.0 H1648.8" stroke="#f3f3f5" stroke-width="1.2"/><path d="M483 961.3 H1648.8" stroke="#f3f3f5" stroke-width="1.2"/><path d="M483 961 V1294.7" stroke="#f3f3f5" stroke-width="1.2"/><path d="M580.0 1294.7 C613.1 1294.7 646.1 958.0 679.2 958.0 H1648.8 V1294.7 Z" fill="#e8f1fd"/><path d="M580.0 1228.0 H1648.8" stroke="#e2ebf8" stroke-width="1" opacity="0.6"/><path d="M580.0 1161.3 H1648.8" stroke="#e2ebf8" stroke-width="1" opacity="0.6"/><path d="M580.0 1094.7 H1648.8" stroke="#e2ebf8" stroke-width="1" opacity="0.6"/><path d="M580.0 1028.0 H1648.8" stroke="#e2ebf8" stroke-width="1" opacity="0.6"/><path d="M580.0 961.3 H1648.8" stroke="#e2ebf8" stroke-width="1" opacity="0.6"/><path d="M480.8 1294.7 H580.0 C613.1 1294.7 646.1 958.0 679.2 958.0 H1648.8" stroke="#2f80e6" stroke-width="2"/><circle cx="480.8" cy="1294.7" r="5.6" fill="#2f80e6"/><circle cx="580.0" cy="1294.7" r="5.6" fill="#2f80e6"/><circle cx="679.2" cy="958.0" r="5.6" fill="#2f80e6"/><circle cx="768.8" cy="958.0" r="5.6" fill="#2f80e6"/><circle cx="868.0" cy="958.0" r="5.6" fill="#2f80e6"/><circle cx="964.0" cy="958.0" r="5.6" fill="#2f80e6"/><circle cx="1063.2" cy="958.0" r="5.6" fill="#2f80e6"/><circle cx="1159.2" cy="958.0" r="5.6" fill="#2f80e6"/><circle cx="1258.4" cy="958.0" r="5.6" fill="#2f80e6"/><circle cx="1357.6" cy="958.0" r="5.6" fill="#2f80e6"/><circle cx="1453.6" cy="958.0" r="5.6" fill="#2f80e6"/><circle cx="1552.8" cy="958.0" r="5.6" fill="#2f80e6"/><circle cx="1648.8" cy="958.0" r="5.6" fill="#2f80e6"/></svg>
<div class="t" style="right:2097px;top:1286.12px;font-size:19px;color:#8b8b8f;font-weight:400;">0</div>
<div class="t" style="right:2097px;top:1219.44px;font-size:19px;color:#8b8b8f;font-weight:400;">100</div>
<div class="t" style="right:2097px;top:1152.76px;font-size:19px;color:#8b8b8f;font-weight:400;">200</div>
<div class="t" style="right:2097px;top:1086.08px;font-size:19px;color:#8b8b8f;font-weight:400;">300</div>
<div class="t" style="right:2097px;top:1019.40px;font-size:19px;color:#8b8b8f;font-weight:400;">400</div>
<div class="t" style="right:2097px;top:952.72px;font-size:19px;color:#8b8b8f;font-weight:400;">500</div>
<div class="t" style="left:540.0px;width:80px;text-align:center;top:1310.26px;font-size:18.6px;color:#8b8b8f;">Jan</div>
<div class="t" style="left:540.0px;width:80px;text-align:center;top:1332.18px;font-size:15.5px;color:#8b8b8f;">2025</div>
<div class="t" style="left:639.2px;width:80px;text-align:center;top:1310.26px;font-size:18.6px;color:#8b8b8f;">Feb</div>
<div class="t" style="left:639.2px;width:80px;text-align:center;top:1332.18px;font-size:15.5px;color:#8b8b8f;">2025</div>
<div class="t" style="left:728.8px;width:80px;text-align:center;top:1310.26px;font-size:18.6px;color:#8b8b8f;">Mar</div>
<div class="t" style="left:728.8px;width:80px;text-align:center;top:1332.18px;font-size:15.5px;color:#8b8b8f;">2025</div>
<div class="t" style="left:828.0px;width:80px;text-align:center;top:1310.26px;font-size:18.6px;color:#8b8b8f;">Apr</div>
<div class="t" style="left:828.0px;width:80px;text-align:center;top:1332.18px;font-size:15.5px;color:#8b8b8f;">2025</div>
<div class="t" style="left:924.0px;width:80px;text-align:center;top:1310.26px;font-size:18.6px;color:#8b8b8f;">May</div>
<div class="t" style="left:924.0px;width:80px;text-align:center;top:1332.18px;font-size:15.5px;color:#8b8b8f;">2025</div>
<div class="t" style="left:1023.2px;width:80px;text-align:center;top:1310.26px;font-size:18.6px;color:#8b8b8f;">Jun</div>
<div class="t" style="left:1023.2px;width:80px;text-align:center;top:1332.18px;font-size:15.5px;color:#8b8b8f;">2025</div>
<div class="t" style="left:1119.2px;width:80px;text-align:center;top:1310.26px;font-size:18.6px;color:#8b8b8f;">Jul</div>
<div class="t" style="left:1119.2px;width:80px;text-align:center;top:1332.18px;font-size:15.5px;color:#8b8b8f;">2025</div>
<div class="t" style="left:1218.4px;width:80px;text-align:center;top:1310.26px;font-size:18.6px;color:#8b8b8f;">Aug</div>
<div class="t" style="left:1218.4px;width:80px;text-align:center;top:1332.18px;font-size:15.5px;color:#8b8b8f;">2025</div>
<div class="t" style="left:1317.6px;width:80px;text-align:center;top:1310.26px;font-size:18.6px;color:#8b8b8f;">Sep</div>
<div class="t" style="left:1317.6px;width:80px;text-align:center;top:1332.18px;font-size:15.5px;color:#8b8b8f;">2025</div>
<div class="t" style="left:1413.6px;width:80px;text-align:center;top:1310.26px;font-size:18.6px;color:#8b8b8f;">Oct</div>
<div class="t" style="left:1413.6px;width:80px;text-align:center;top:1332.18px;font-size:15.5px;color:#8b8b8f;">2025</div>
<div class="t" style="left:1512.8px;width:80px;text-align:center;top:1310.26px;font-size:18.6px;color:#8b8b8f;">Nov</div>
<div class="t" style="left:1512.8px;width:80px;text-align:center;top:1332.18px;font-size:15.5px;color:#8b8b8f;">2025</div>
<div class="t" style="left:1608.8px;width:80px;text-align:center;top:1310.26px;font-size:18.6px;color:#8b8b8f;">Dec</div>
<div class="t" style="left:1608.8px;width:80px;text-align:center;top:1332.18px;font-size:15.5px;color:#8b8b8f;">2025</div>
<div style="position:absolute;left:1711.5px;top:940px;width:1.5px;height:436px;background:#e6e7ee;"></div>
<div class="t" style="left:1840px;top:929.93px;font-size:23px;color:#6b7085;font-weight:400;">Cash as on 01/01/2025</div>
<div class="t" style="left:1837px;top:1308.84px;font-size:25px;color:#3f8cf1;font-weight:400;">Cash as on 31/12/2025</div>
<div style="position:absolute;left:392px;top:1503px;width:861px;height:200px;box-sizing:border-box;border:1.5px solid #e6e7ee;border-radius:14px;background:#fff;overflow:hidden;"><div style="height:88px;background:#f8f8fb;border-bottom:1.5px solid #e6e7ee;"></div></div>
<div class="t" style="left:409px;top:1530.40px;font-size:33.2px;color:#0d0f1a;font-weight:400;">Income and Expense</div>
<div class="t" style="left:1039.5px;top:1538.18px;font-size:24px;color:#2b2e3a;font-weight:400;">This Fiscal Year</div>
<svg style="position:absolute;left:1219px;top:1546px;" width="18" height="12" viewBox="0 0 18 12" fill="none"><path d="M3 3 L9 9 L15 3" stroke="#2f80e6" stroke-width="2.6" stroke-linecap="round" stroke-linejoin="round"/></svg>
<div style="position:absolute;left:1307px;top:1503px;width:861px;height:200px;box-sizing:border-box;border:1.5px solid #e6e7ee;border-radius:14px;background:#fff;overflow:hidden;"><div style="height:88px;background:#f8f8fb;border-bottom:1.5px solid #e6e7ee;"></div></div>
<div class="t" style="left:1327px;top:1529.81px;font-size:33.3px;color:#0d0f1a;font-weight:400;">Top Expenses</div>
<div class="t" style="left:1958px;top:1538.18px;font-size:24px;color:#2b2e3a;font-weight:400;">This Fiscal Year</div>
<div style="position:absolute;left:2439.5px;top:412px;width:85px;height:85px;background:linear-gradient(180deg,#3487e2,#1a70d8);border-radius:50%;box-shadow:0 3px 10px rgba(0,0,0,0.12);"></div>
<svg style="position:absolute;left:2466px;top:445.5px;" width="32" height="24" viewBox="0 0 32 24" fill="none"><path d="M4.5 5.5 L16 17 L27.5 5.5" stroke="#fff" stroke-width="2.9" stroke-linecap="round" stroke-linejoin="round"/></svg>
<div style="position:absolute;left:1874px;top:519px;width:659px;height:1036px;border-radius:32px;background:#fff;box-shadow:0 3px 16px rgba(0,0,0,0.14);overflow:hidden;"><div style="position:absolute;left:0;top:0;width:659px;height:230px;background:linear-gradient(180deg,#2a81df 0%,#1f78dc 35%,#1170d7 70%,#0767d1 100%);"></div><div style="position:absolute;left:0;top:195.7px;width:659px;height:841px;background:#fff;border-radius:26px 26px 0 0;"></div></div>
<div style="position:absolute;left:1916.5px;top:572px;width:89px;height:89px;background:#1765c0;border-radius:50%;"></div>
<svg style="position:absolute;left:1931px;top:591px;" width="60" height="60" viewBox="0 0 60 60" fill="none"><path d="M10.1 14.3 C10.1 12.2 11.9 10.5 14 10.5 H38.1 C40.3 10.5 42.1 12.3 42.1 14.5 V30.9 C42.1 33.1 40.3 34.9 38.1 34.9 H19.4 L11.6 40.8 C11 41.2 10.1 40.8 10.1 40 Z" fill="#fff"/><path d="M44.4 20.3 C47.2 20.3 49.4 22.5 49.4 25.3 V48.9 C49.4 49.6 48.6 50 48 49.6 L41.5 44.8 H23.9 C21.7 44.8 20 43 20 40.9 V37.3 H38.1 C41.6 37.3 44.4 34.5 44.4 31 Z" fill="#fff"/><path d="M17.1 19.2 H35.3 M17.1 25.6 H29" stroke="#1765c0" stroke-width="2.4" stroke-linecap="round"/></svg>
<div class="t" style="left:2041.7px;top:599.71px;font-size:38.5px;color:#ffffff;font-weight:400;transform:scaleX(0.99);transform-origin:left top;-webkit-text-stroke:1.1px #fff;">Conversation(s)</div>
<svg style="position:absolute;left:2040px;top:880px;" width="320" height="320" viewBox="0 0 1512 1512" fill="none"><defs><filter id="blr" x="-50%" y="-200%" width="200%" height="500%"><feGaussianBlur stdDeviation="14"/></filter></defs>
<ellipse cx="550" cy="1415" rx="200" ry="14" fill="#dcdcdc" filter="url(#blr)"/>
<ellipse cx="1150" cy="1415" rx="190" ry="14" fill="#dcdcdc" filter="url(#blr)"/>
<path d="M160 1000 C250 930 380 920 480 960 C560 990 640 1000 725 995 L725 1055 C640 1070 560 1060 470 1040 C380 1020 260 1000 160 1005 Z" fill="#f0f0f0"/>
<path d="M1120 665 C1140 560 1125 450 1075 350 C990 180 820 80 640 80 C360 80 140 300 140 580 C140 680 160 760 190 850 C195 900 165 950 140 985 C130 1005 150 1015 175 1010 C260 995 360 1010 460 1035 C540 1055 620 1070 725 1055" stroke="#e2e2e2" stroke-width="9" stroke-linecap="round" stroke-linejoin="round"/>
<path d="M420 485 C440 515 480 515 500 485 M845 485 C865 515 905 515 925 485" stroke="#e2e2e2" stroke-width="10" stroke-linecap="round"/>
<ellipse cx="460" cy="555" rx="45" ry="10" fill="#ececec"/><ellipse cx="888" cy="555" rx="45" ry="10" fill="#ececec"/>
<path d="M545 650 C620 665 720 665 795 645 C815 640 810 665 800 690 C770 750 720 775 665 775 C610 775 560 745 540 690 C530 665 530 648 545 650 Z" fill="#ebebeb" stroke="#e2e2e2" stroke-width="9"/>
<path d="M1045 690 C885 690 755 820 755 980 C755 1140 885 1270 1045 1270 C1120 1270 1200 1245 1260 1235 C1290 1230 1345 1240 1335 1215 C1310 1180 1300 1150 1310 1100 C1325 1060 1340 1020 1340 980 C1340 820 1205 690 1045 690 Z" fill="#fff" stroke="#e2e2e2" stroke-width="9" stroke-linejoin="round"/>
<path d="M810 1130 C860 1200 940 1230 1045 1225 C1140 1220 1220 1195 1300 1200 L1320 1225 C1230 1220 1130 1265 1040 1262 C930 1258 850 1210 810 1130 Z" fill="#f0f0f0"/>
<path d="M865 910 C885 885 920 885 940 910 M1120 910 C1140 885 1175 885 1195 910" stroke="#e2e2e2" stroke-width="9" stroke-linecap="round"/>
<ellipse cx="900" cy="945" rx="30" ry="8" fill="#ececec"/><ellipse cx="1160" cy="945" rx="30" ry="8" fill="#ececec"/>
<path d="M945 968 C1000 975 1060 975 1115 965 C1125 963 1125 985 1118 1000 C1100 1035 1070 1055 1030 1055 C990 1055 960 1035 945 1000 C938 985 935 966 945 968 Z" fill="#ebebeb" stroke="#e2e2e2" stroke-width="9"/>
<path d="M1285 650 L1258 698 M1350 698 L1310 738 M1388 776 L1330 790" stroke="#e6e6e6" stroke-width="16" stroke-linecap="round"/>
<path d="M1065 110 L1078 140 L1105 148 L1078 158 L1065 185 L1052 158 L1030 148 L1052 140 Z" fill="#ececec"/>
<path d="M1200 135 L1210 155 L1228 160 L1210 167 L1200 190 L1190 167 L1172 160 L1190 155 Z" fill="#ececec"/>
<path d="M1162 240 L1172 260 L1190 268 L1172 276 L1162 295 L1152 276 L1135 268 L1152 260 Z" fill="#ececec"/></svg>
<div class="t" style="left:2047px;top:1226.90px;font-size:28px;color:#8c8c8c;font-weight:400;transform:scaleX(0.985);transform-origin:left top;">No ongoing conversation</div>
<div style="position:absolute;left:2076px;top:1309px;width:254px;height:68px;background:#0966d0;border-radius:7px;"></div>
<svg style="position:absolute;left:2115px;top:1320px;" width="45" height="45" viewBox="0 0 45 45" fill="none"><path d="M12.1 9.7 H33.6 C35.3 9.7 36.6 11 36.6 12.7 V27.8 C36.6 29.5 35.3 30.8 33.6 30.8 H16.1 L10.8 36 C10.2 36.6 9.1 36.2 9.1 35.3 V12.7 C9.1 11 10.4 9.7 12.1 9.7 Z" fill="#fff"/><path d="M14.6 17.3 H31.2 M14.6 22.9 H25.3" stroke="#0966d0" stroke-width="2.4" stroke-linecap="round"/></svg>
<div class="t" style="left:2166.5px;top:1332.45px;font-size:26.4px;color:#ffffff;font-weight:400;">Chat Now</div>
</body></html>
